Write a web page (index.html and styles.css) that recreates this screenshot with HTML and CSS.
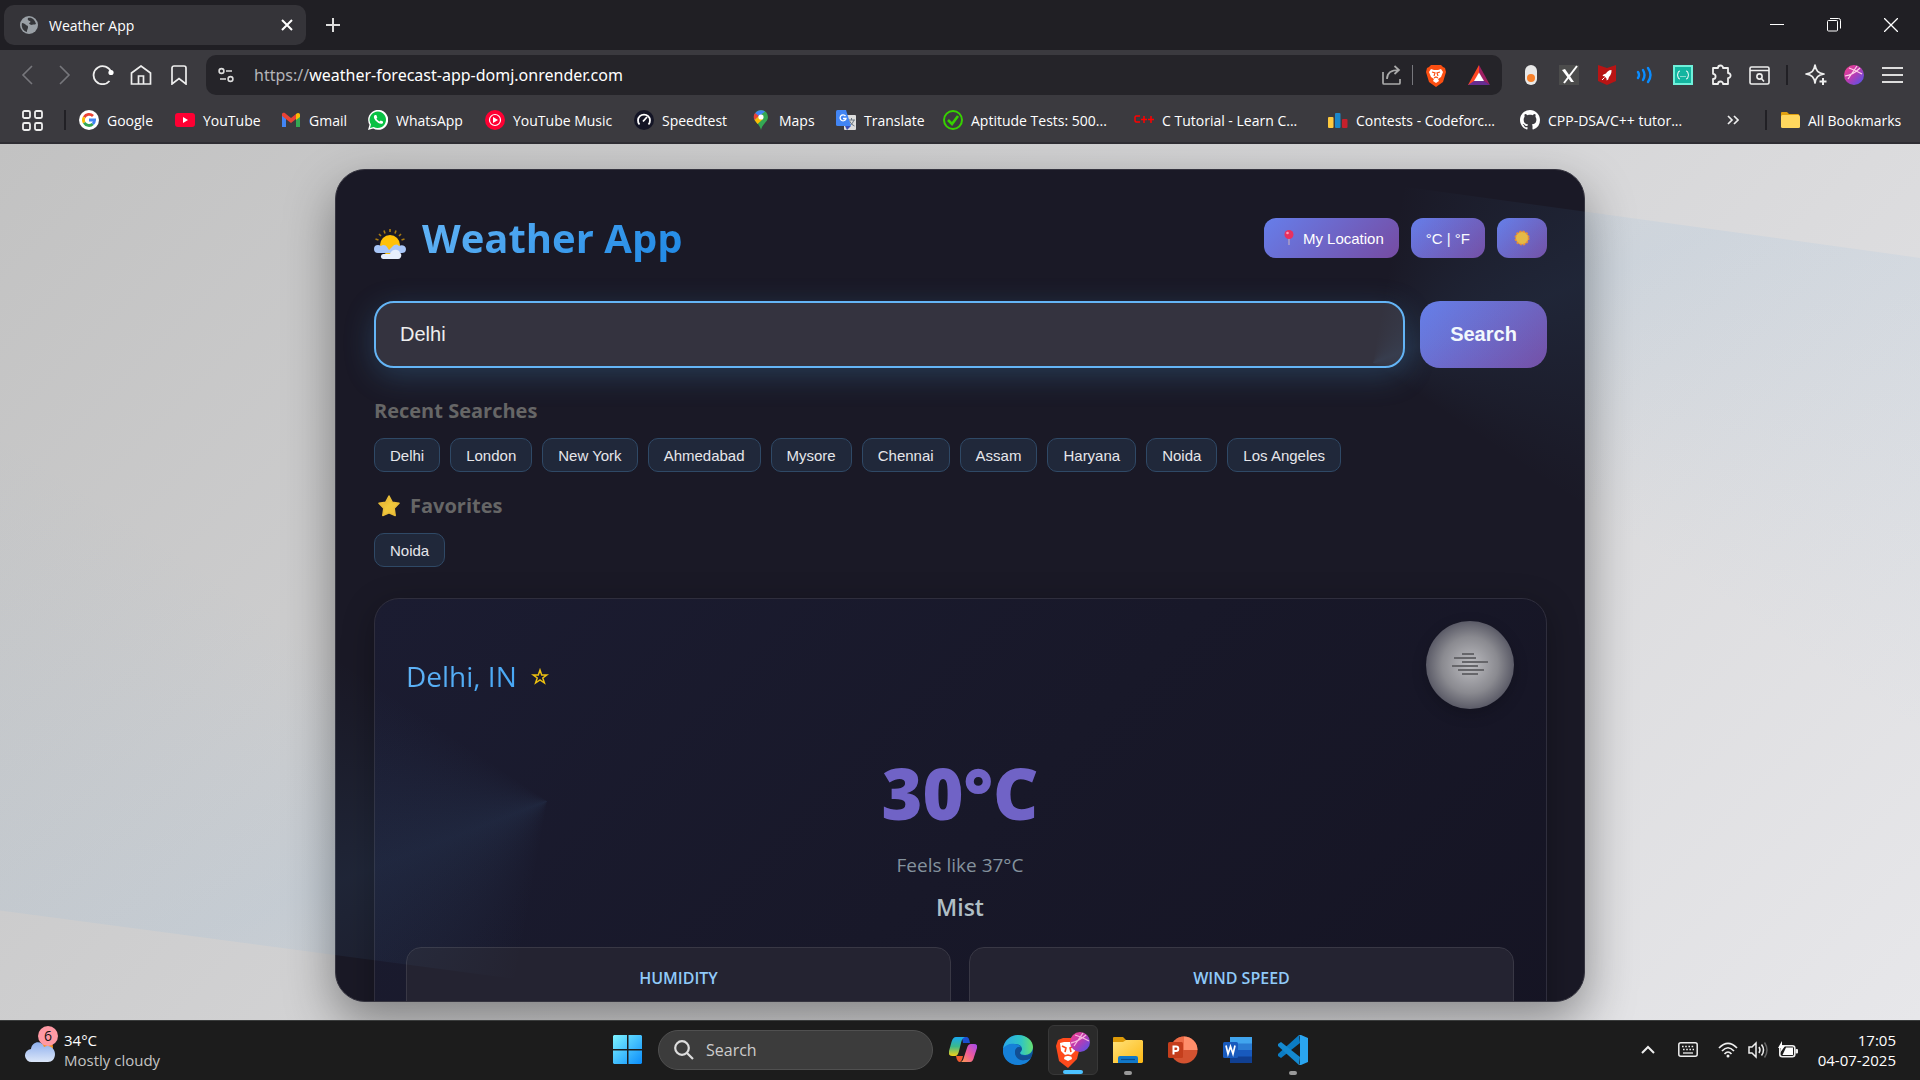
FILE: index.html
```html
<!DOCTYPE html>
<html lang="en">
<head>
<meta charset="utf-8">
<title>Weather App</title>
<link rel="stylesheet" href="styles.css">
</head>
<body>
<header class="browser">
  <div class="tabstrip">
    <div class="tab">
      <svg width="18" height="18" viewBox="0 0 18 18"><circle cx="9" cy="9" r="9" fill="#9aa0a6"/><path d="M2 7c2 0 3 1 4 2s2 0 2 2-1 2-1 5C3 15 1 11 2 7zM8 2c4-1 7 2 8 6-2 1-3 0-4 1-1 0-3-1-3-2 1 0 2-1 1-2-1 0-3-1-2-3z" fill="#35363a"/></svg>
      <span class="tab-title">Weather App</span>
      <button class="icon-btn tab-close" aria-label="Close tab"><svg width="12" height="12" viewBox="0 0 12 12" stroke="#fff" stroke-width="2"><path d="M1 1l10 10M11 1L1 11"/></svg></button>
    </div>
    <button class="icon-btn new-tab" aria-label="New tab"><svg width="14" height="14" viewBox="0 0 14 14" stroke="#ddd" stroke-width="2"><path d="M7 0v14M0 7h14"/></svg></button>
    <div class="window-controls">
      <button class="icon-btn" aria-label="Minimize"><svg width="14" height="14" viewBox="0 0 14 14" stroke="#fff"><path d="M0 6.500h14"/></svg></button>
      <button class="icon-btn" aria-label="Restore"><svg width="14" height="14" viewBox="0 0 14 14" stroke="#fff" fill="none"><rect x=".5" y="2.500" width="10" height="10.500" rx="1"/><path d="M3 .5h8.500a2 2 0 0 1 2 2v8"/></svg></button>
      <button class="icon-btn" aria-label="Close"><svg width="14" height="14" viewBox="0 0 14 14" stroke="#fff" stroke-width="1.300"><path d="M0 0l14 14M14 0L0 14"/></svg></button>
    </div>
  </div>

  <div class="toolbar">
    <button class="icon-btn" aria-label="Back"><svg width="12" height="20" viewBox="0 0 12 20" stroke="#77777c" stroke-width="1.600" fill="none"><path d="M11 1L2 10l9 9"/></svg></button>
    <button class="icon-btn" aria-label="Forward"><svg width="12" height="20" viewBox="0 0 12 20" stroke="#77777c" stroke-width="1.600" fill="none"><path d="M1 1l9 9-9 9"/></svg></button>
    <button class="icon-btn" aria-label="Reload"><svg width="22" height="20" viewBox="0 0 22 20" stroke="#eee" stroke-width="1.800" fill="none"><path d="M17.500 16A9 9 0 1 1 19 7"/><circle cx="19" cy="7.500" r="2.600" fill="#fff" stroke="none"/></svg></button>
    <button class="icon-btn" aria-label="Home"><svg width="22" height="20" viewBox="0 0 22 20" stroke="#eee" stroke-width="1.700" fill="none"><path d="M1.500 8L11 1l9.500 7v11h-19zM8.500 19v-8h5v8"/></svg></button>
    <button class="icon-btn" aria-label="Bookmark this page"><svg width="16" height="20" viewBox="0 0 16 20" stroke="#eee" stroke-width="1.700" fill="none"><path d="M1 3a2 2 0 0 1 2-2h10a2 2 0 0 1 2 2v16l-7-5.500L1 19z"/></svg></button>
    <div class="omnibox">
      <svg width="16" height="16" viewBox="0 0 16 16" stroke="#ddd" stroke-width="1.600" fill="none"><circle cx="3.500" cy="4" r="2.400"/><path d="M8 4h6M2 12h6"/><circle cx="12.500" cy="12" r="2.400"/></svg>
      <span class="url"><span class="scheme">https://</span>weather-forecast-app-domj.onrender.com</span>
      <svg width="19" height="20" viewBox="0 0 19 20" stroke="#aaa" stroke-width="1.700" fill="none"><path d="M1 7v11a1 1 0 0 0 1 1h15a1 1 0 0 0 1-1v-4M5 14c0-6 4-9 12-9M12.500 1L17 5l-4.500 4"/></svg>
      <i class="omni-divider"></i>
      <svg width="20" height="23" viewBox="0 0 20 23"><path d="M5 1h10l2 2 2 1 1 4-3 10-7 5-7-5L0 8l1-4 2-1z" fill="#fb4f12"/><path d="M5 5l3 1h4l3-1 2 3-2 5-3 2 1 2-3 2-3-2 1-2-3-2-2-5z" fill="#fff"/><path d="M6 8l3 1-1 3M14 8l-3 1 1 3M8 14l2-1 2 1" stroke="#fb4f12" stroke-width="1.200" fill="none"/></svg>
      <svg width="22" height="20" viewBox="0 0 22 20"><path d="M11 0L0 20h5l6-12z" fill="#ff4724"/><path d="M11 0l11 20-6-3.500L11 8z" fill="#9e1f63"/><path d="M0 20h22l-6-4H6z" fill="#662d91"/><path d="M11 7.500l5 8.500H6z" fill="#fff"/></svg>
    </div>
    <button class="icon-btn" aria-label="Toggle extension"><svg width="14" height="20" viewBox="0 0 14 20"><rect x="1" width="12" height="20" rx="6" fill="#e8e8e8"/><circle cx="7" cy="13" r="4" fill="#f7812b"/></svg></button>
    <button class="icon-btn" aria-label="X extension"><svg width="20" height="20" viewBox="0 0 20 20"><rect width="20" height="20" fill="#4c4c4c"/><path d="M3 5l3-1 9 13h-3z" fill="#fff"/><path d="M18 1L5 18" stroke="#fff" stroke-width="2"/></svg></button>
    <button class="icon-btn" aria-label="Security"><svg width="18" height="20" viewBox="0 0 18 20"><path d="M0 0l9 3 9-3v16l-9 4-9-4z" fill="#b81414"/><path d="M13.500 5c-3 0-4.500 2-5.500 3.500L5.500 9.500 4.500 11l2 .2L8.500 13.500l.2 2 1.500-1 .8-2.500c1.500-1.500 2.800-4 2.500-7z" fill="#fff"/><path d="M6.500 12.500L4 15" stroke="#fff"/></svg></button>
    <button class="icon-btn" aria-label="Volume extension"><svg width="18" height="18" viewBox="0 0 18 18" stroke="#0a8cff" stroke-width="2.400" stroke-linecap="round" fill="none"><path d="M2 6q2 3 0 6M7 4q3 5 0 10M12 2q5 7 0 14"/></svg></button>
    <button class="icon-btn" aria-label="JSON viewer"><svg width="20" height="20" viewBox="0 0 20 20"><rect x="1" y="1" width="18" height="18" fill="#13b5a0" stroke="#6ff0da" stroke-width="2"/><path d="M7 6q-2 0-2 2t-1 2q1 0 1 2t2 2M13 6q2 0 2 2t1 2q-1 0-1 2t-2 2" stroke="#fff" fill="none"/><path d="M7.500 11.500h5" stroke="#fff" stroke-dasharray="1 1"/></svg></button>
    <button class="icon-btn" aria-label="Extensions"><svg width="22" height="22" viewBox="0 0 22 22" stroke="#eee" stroke-width="1.800" fill="none" stroke-linejoin="round"><path d="M3 4h5a2.500 2.500 0 1 1 5 0h5v5a2.600 2.600 0 1 1 0 5.200V20h-5a2.500 2.500 0 0 0-5 0H3v-5a2.600 2.600 0 1 0 0-5.200z"/></svg></button>
    <button class="icon-btn" aria-label="Search page"><svg width="21" height="19" viewBox="0 0 21 19" stroke="#eee" stroke-width="1.600" fill="none"><rect x="1" y="1" width="19" height="17" rx="1.500"/><path d="M1 4.500h19M12.500 12.500l2.500 3"/><circle cx="10.500" cy="10.500" r="2.600"/></svg></button>
    <i class="bar-divider"></i>
    <button class="icon-btn" aria-label="Assistant"><svg width="22" height="22" viewBox="0 0 22 22" stroke="#eee" stroke-width="1.700" fill="none" stroke-linejoin="round"><path d="M10 1c1 6 3 8 9 9-6 1-8 3-9 9-1-6-3-8-9-9 6-1 8-3 9-9z"/><path d="M18 14v7M14.500 17.500h7" stroke-width="2"/></svg></button>
    <button class="icon-btn" aria-label="Profile"><svg width="20" height="20" viewBox="0 0 20 20"><defs><linearGradient id="av" x1="0" y1="0" x2="1" y2="1"><stop offset="0" stop-color="#fb3f8a"/><stop offset=".5" stop-color="#b63cb4"/><stop offset="1" stop-color="#4556f2"/></linearGradient></defs><circle cx="10" cy="10" r="10" fill="url(#av)"/><path d="M1 11Q9 10 16 3M5 3q6 2 13 6M4 14L13 1" stroke="#ffd0e8" stroke-width="1.200" fill="none"/></svg></button>
    <button class="icon-btn" aria-label="Menu"><svg width="21" height="18" viewBox="0 0 21 18" stroke="#ddd" stroke-width="2"><path d="M0 2h21M0 9h21M0 16h21"/></svg></button>
  </div>

  <nav class="bookmarks" aria-label="Bookmarks">
    <button class="icon-btn" aria-label="Apps"><svg width="21" height="21" viewBox="0 0 21 21" stroke="#eee" stroke-width="1.800" fill="none"><rect x="1" y="1" width="7" height="7" rx="1.500"/><rect x="13" y="1" width="7" height="7" rx="1.500"/><rect x="1" y="13" width="7" height="7" rx="1.500"/><rect x="13" y="13" width="7" height="7" rx="1.500"/></svg></button>
    <i class="bar-divider"></i>
    <a href="#"><svg width="20" height="20" viewBox="0 0 20 20"><circle cx="10" cy="10" r="10" fill="#fff"/><g fill="none" stroke-width="2.800"><path d="M14 6A5.600 5.600 0 0 0 5.200 7.200" stroke="#ea4335"/><path d="M5.200 7.200a5.600 5.600 0 0 0 0 5.600" stroke="#fbbc05"/><path d="M5.200 12.800A5.600 5.600 0 0 0 13.800 14" stroke="#34a853"/><path d="M13.800 14a5.600 5.600 0 0 0 1.800-4H10" stroke="#4285f4"/></g></svg>Google</a>
    <a href="#"><svg width="20" height="20" viewBox="0 0 20 20"><rect y="3" width="20" height="14" rx="3" fill="#ff0033"/><path d="M8 7l5 3-5 3z" fill="#fff"/></svg>YouTube</a>
    <a href="#"><svg width="20" height="20" viewBox="0 0 20 20"><path d="M1 5v12h4V8z" fill="#4285f4"/><path d="M19 5v12h-4V8z" fill="#34a853"/><path d="M1 4c1-2 3-1 4 0l5 4 5-4v5l-5 4-9-7z" fill="#ea4335"/><path d="M15 4c2-2 4-1 4 1v2l-4 3z" fill="#fbbc04"/></svg>Gmail</a>
    <a href="#"><svg width="20" height="20" viewBox="0 0 20 20"><path d="M0 20l1.500-5.200A10 10 0 1 1 5.200 18.500z" fill="#fff"/><path d="M2 18l1-3.600a8.200 8.200 0 1 1 2.700 2.500z" fill="#0ac144"/><path d="M7 5c-2 1-1 4 1 6s5 4 7 2l0-1.500-2.300-1-1 1c-1.500-.5-2.700-1.700-3.200-3l.8-1L8.300 5z" fill="#fff"/></svg>WhatsApp</a>
    <a href="#"><svg width="20" height="20" viewBox="0 0 20 20"><circle cx="10" cy="10" r="10" fill="#f03"/><circle cx="10" cy="10" r="5.500" fill="none" stroke="#fff" stroke-width="1.200"/><path d="M8 7l5 3-5 3z" fill="#fff"/></svg>YouTube Music</a>
    <a href="#"><svg width="20" height="20" viewBox="0 0 20 20"><circle cx="10" cy="10" r="10" fill="#141526"/><path d="M5.500 14.500a6 6 0 1 1 9 0M9 11.500L13 7" stroke="#fff" stroke-width="1.800" fill="none"/></svg>Speedtest</a>
    <a href="#"><svg width="20" height="20" viewBox="0 0 20 20"><path d="M10 20c-1-6-7-8-7-13a7 7 0 0 1 14 0c0 5-6 7-7 13z" fill="#34a853"/><path d="M3.500 10L14 1.500A7 7 0 0 0 3 7z" fill="#4285f4"/><path d="M4 3l4 3-4.500 4A7 7 0 0 1 4 3z" fill="#ea4335"/><path d="M3.500 10L9 5l3 4-5.500 5z" fill="#fbbc04"/><circle cx="10" cy="7" r="2.600" fill="#fff"/></svg>Maps</a>
    <a href="#"><svg width="20" height="20" viewBox="0 0 20 20"><rect x="8" y="5" width="12" height="15" rx="1" fill="#ddd"/><path d="M12 10h7M15.500 8v2M18 10q-1 4-5 6M13.500 11q2 4 5 5" stroke="#6b7680" fill="none"/><path d="M0 1.500Q0 0 1.500 0H10l5 16H1.500Q0 16 0 14.500z" fill="#4285f4"/><path d="M9 16h6l-4 4z" fill="#3a50b8"/><path d="M9.500 6A3 3 0 1 0 10 8.500H7" stroke="#fff" stroke-width="1.300" fill="none"/></svg>Translate</a>
    <a href="#"><svg width="20" height="20" viewBox="0 0 20 20" fill="none" stroke="#37d100"><circle cx="10" cy="10" r="9" stroke-width="2"/><path d="M5 10l4 4 6-8" stroke-width="2.600"/></svg>Aptitude Tests: 500...</a>
    <a href="#"><svg width="20" height="20" viewBox="0 0 20 20" fill="none" stroke="#f00" stroke-width="1.500"><path d="M6 6H2L1 7v4l1 1h4M7 9.500h6M10 6v7M14 9.500h6M17 6v7"/></svg>C Tutorial - Learn C...</a>
    <a href="#"><svg width="20" height="20" viewBox="0 0 20 20"><rect y="7" width="5.500" height="11" rx="1" fill="#fdc93f"/><rect x="7" y="3" width="5.500" height="15" rx="1" fill="#1b87cb"/><rect x="14" y="9" width="5.500" height="9" rx="1" fill="#c5202c"/></svg>Contests - Codeforc...</a>
    <a href="#"><svg width="20" height="20" viewBox="0 0 16 16"><path fill="#fff" d="M8 0C3.580 0 0 3.580 0 8c0 3.540 2.290 6.530 5.470 7.590.4.070.55-.17.55-.38 0-.19-.01-.82-.01-1.490-2.010.37-2.530-.49-2.690-.94-.09-.23-.48-.94-.82-1.130-.28-.15-.68-.52-.01-.53.63-.01 1.080.58 1.230.82.72 1.210 1.870.87 2.330.66.070-.52.28-.87.51-1.070-1.780-.2-3.640-.89-3.640-3.950 0-.87.31-1.590.82-2.150-.08-.2-.36-1.020.08-2.120 0 0 .67-.21 2.200.82.64-.18 1.320-.27 2-.27s1.360.09 2 .27c1.530-1.040 2.200-.82 2.200-.82.44 1.100.16 1.920.08 2.120.51.56.82 1.270.82 2.150 0 3.070-1.870 3.750-3.650 3.950.29.25.54.73.54 1.480 0 1.070-.01 1.930-.01 2.200 0 .21.15.46.55.38A8.010 8.010 0 0 0 16 8c0-4.420-3.580-8-8-8z"/></svg>CPP-DSA/C++ tutor...</a>
    <button class="icon-btn" aria-label="More bookmarks"><svg width="12" height="10" viewBox="0 0 12 10" stroke="#eee" stroke-width="1.700" fill="none"><path d="M1 1l4 4-4 4M7 1l4 4-4 4"/></svg></button>
    <i class="bar-divider"></i>
    <a href="#"><svg width="20" height="20" viewBox="0 0 20 20"><path d="M1 3q0-1 1-1h5l2 2h9q1 0 1 1v3H1z" fill="#e0a010"/><rect x="1" y="5" width="19" height="13" rx="1.500" fill="#ffd75e"/></svg>All Bookmarks</a>
  </nav>
</header>

<main class="page">
  <section class="app">
    <div class="app-header">
      <h1>
        <svg width="32" height="32" viewBox="0 0 32 32"><g stroke="#a87a12" stroke-width="1.600"><path d="M16 1v3M10 2.500l1 3M22 2.500l-1 3M5 6l2 2M27 6l-2 2M1.500 11l3 1M30.500 11l-3 1"/></g><circle cx="16" cy="17" r="10" fill="#ffc107"/><path d="M4 25a4 4 0 0 1 0-8c1 0 2 .4 3 1 2-2 5-1 6 1l2 3 3-3c3-3 5-3 7-1 3-2 7 0 7 3s-2 4-4 4z" fill="#a9c6f7"/><path d="M9 31a2 2 0 0 1 1-5l6 0c1-5 9-6 10-1 2 0 2 6-2 6z" fill="#e6eefc"/></svg>
        <span>Weather App</span>
      </h1>
      <div class="actions">
        <button class="pill"><svg width="12" height="16" viewBox="0 0 12 16"><path d="M6 8v7" stroke="#b9a8c4" stroke-width="1.300"/><circle cx="6" cy="4.500" r="4.500" fill="#e8305f"/><circle cx="4.500" cy="3" r="1.300" fill="#ff9ab4"/></svg>My Location</button>
        <button class="pill">°C | °F</button>
        <button class="pill" aria-label="Toggle theme"><svg class="sun" width="16" height="16" viewBox="0 0 16 16"><circle cx="8" cy="8" r="6.500" fill="#f0b232" stroke="#ef8a2c" stroke-width="2" stroke-dasharray="2 1.400"/><circle cx="8" cy="8" r="5.800" fill="#edbb3c"/></svg></button>
      </div>
    </div>

    <form class="search">
      <input type="text" value="Delhi" aria-label="City">
      <button type="button">Search</button>
    </form>

    <section class="group">
      <h2>Recent Searches</h2>
      <div class="chips">
        <button>Delhi</button><button>London</button><button>New York</button><button>Ahmedabad</button><button>Mysore</button><button>Chennai</button><button>Assam</button><button>Haryana</button><button>Noida</button><button>Los Angeles</button>
      </div>
    </section>
    <section class="group">
      <h2><svg width="28" height="24" viewBox="0 0 28 24"><defs><linearGradient id="st" x1="0" y1="0" x2="1" y2="1"><stop offset="0" stop-color="#e0a52e"/><stop offset=".5" stop-color="#efc93c"/><stop offset="1" stop-color="#eebd3a"/></linearGradient></defs><path d="M15 2l3.200 6.200 6.800 1.100-4.800 5 1 7.200-6.200-2.600-6.200 2.600 1-7.200-4.800-5 6.800-1.100z" fill="url(#st)" stroke="#e9bd38" stroke-width="1.500" stroke-linejoin="round"/></svg>Favorites</h2>
      <div class="chips"><button>Noida</button></div>
    </section>

    <article class="weather">
      <div class="place">
        <h2><span>Delhi, IN</span><button class="fav" aria-label="Add to favorites"><svg width="18" height="17" viewBox="0 0 18 17"><path d="M9 2l1.700 4.900H16l-4.200 3.100 1.600 5L9 12l-4.400 3 1.600-5L2 6.900h5.300z" fill="none" stroke="#ecc010" stroke-width="1.500"/></svg></button></h2>
        <div class="condition">
          <svg width="36" height="26" viewBox="0 0 36 26" stroke="#66666a" stroke-width="2.200"><path d="M10 2h12M2 6h22M10 10h26M0 14h26M6 18h26M10 22h16"/></svg>
        </div>
      </div>
      <p class="temp">30°C</p>
      <p class="feels">Feels like 37°C</p>
      <p class="desc">Mist</p>
      <div class="stats">
        <div class="stat"><h3>HUMIDITY</h3></div>
        <div class="stat"><h3>WIND SPEED</h3></div>
      </div>
    </article>
  </section>
  <div class="glow"></div>
</main>

<footer class="taskbar">
  <div class="widget">
    <div class="widget-icon">
      <svg width="30" height="30" viewBox="0 0 30 30"><defs><linearGradient id="cl" x1="0" y1="0" x2="0" y2="1"><stop offset="0" stop-color="#8fb0ee"/><stop offset="1" stop-color="#dbe6f8"/></linearGradient></defs><circle cx="22" cy="12" r="6" fill="#f7901e"/><path d="M7 27a6.500 6.500 0 0 1-1-13C7 6 17 5 19 12c6-3 11 2 11 7s-3 8-7 8z" fill="url(#cl)"/></svg>
      <span class="badge">6</span>
    </div>
    <div><div class="bright">34°C</div><div>Mostly cloudy</div></div>
  </div>
  <div class="dock">
    <button class="icon-btn" aria-label="Start"><svg width="30" height="30" viewBox="0 0 30 30"><defs><linearGradient id="wi" x1="0" y1="0" x2="1" y2="1"><stop offset="0" stop-color="#7df3ff"/><stop offset="1" stop-color="#0b8dfb"/></linearGradient></defs><path d="M1 0h13v14H0V1zM15.500 0H28l1 1v13H15.500zM0 15.500h14V29H1l-1-1zM15.500 15.500H29V28l-1 1H15.500z" fill="url(#wi)"/></svg></button>
    <label class="task-search"><svg width="20" height="20" viewBox="0 0 20 20" stroke="#ddd" stroke-width="2.200" fill="none"><circle cx="8" cy="8" r="6.800"/><path d="M13 13l6 6"/></svg><input type="text" placeholder="Search" aria-label="Search"></label>
    <button class="icon-btn" aria-label="Copilot"><svg width="28" height="26" viewBox="0 0 28 26"><defs><linearGradient id="c1" x1="0" y1="0" x2="0" y2="1"><stop offset="0" stop-color="#18a8f0"/><stop offset=".5" stop-color="#3bb98a"/><stop offset="1" stop-color="#f5d016"/></linearGradient><linearGradient id="c2" x1="1" y1="0" x2="0" y2="1"><stop offset="0" stop-color="#a14af0"/><stop offset=".5" stop-color="#ee5a9a"/><stop offset="1" stop-color="#ff9f4a"/></linearGradient></defs><path d="M13 0h5q2 0 3 6h-7z" fill="#1b4fd0"/><path d="M7 0h9q-3 1-4 6l-2 8q-1 5-4 5H3q-4 0-3-5l2.500-9Q4 0 7 0z" fill="url(#c1)"/><path d="M21 25H11q3 0 4-5l3-9q1-4 4-4h3q4 0 3 4l-3 9q-1 5-4 5z" fill="url(#c2)"/><path d="M7 19h7q-1 5-3 6-3 0-4-6z" fill="#f05a30"/></svg></button>
    <button class="icon-btn" aria-label="Edge"><svg width="30" height="30" viewBox="0 0 30 30"><defs><linearGradient id="e1" x1="0" y1="0" x2="1" y2="0"><stop offset="0" stop-color="#2aa7e8"/><stop offset=".6" stop-color="#2fc5c5"/><stop offset="1" stop-color="#66e070"/></linearGradient></defs><circle cx="15" cy="15" r="15" fill="#0c59a4"/><path d="M0 14C1 5 8 0 15 0c9 0 15 6 15 12 0 5-4 8-8 8-3 0-5-1-5-2s2-2 2-4c0-3-3-5-7-5C7 9 2 12 0 14z" fill="url(#e1)"/><path d="M0 14c2-4 7-6 12-5 3 0 5 2 6 3-4-1-6 2-6 5 0 6 5 9 9 8 3 0 5-1 7-2-3 5-8 7-13 7C5 30-1 22 0 14z" fill="#1680d8"/><path d="M17 18c0 3 6 5 12 1l-1 4c-8 5-16 1-16-6 0-3 3-6 6-4 2 2-1 3-1 5z" fill="#124f94"/></svg></button>
    <button class="icon-btn active" aria-label="Brave"><svg width="34" height="36" viewBox="0 0 34 36"><path d="M7 6h12l4 4 1 5-3 12-9 9-9-7L0 14l2-6z" fill="#ff4a1c"/><path d="M4 11l4-1h8l4 1-1 8-4 4 1 4-4 2-4-2 1-4-4-4z" fill="#fff"/><path d="M6 14l4 2-1 4M18 14l-4 2 1 4M8 24l4-1 4 1" stroke="#ff4a1c" stroke-width="1.600" fill="none"/><circle cx="24" cy="10" r="10" fill="url(#av)"/><path d="M15 11q8-2 15-8M19 3q7 2 14 6M18 14L27 1" stroke="#f7b8e0" stroke-width="1.300" fill="none"/></svg></button>
    <button class="icon-btn open" aria-label="File Explorer"><svg width="30" height="28" viewBox="0 0 30 28"><defs><linearGradient id="fo" x1="0" y1="0" x2="1" y2="1"><stop offset="0" stop-color="#ffe27a"/><stop offset="1" stop-color="#fdb813"/></linearGradient></defs><path d="M0 2q0-1 1-1h9l3 3v5H0z" fill="#dd9a08"/><path d="M0 6h10l3-2h16l1 1v21l-1 1H0z" fill="url(#fo)"/><path d="M5 27v-5q0-2 2-2h16q2 0 2 2v5z" fill="#1178c9"/><path d="M8 23.500h14" stroke="#0a4c8c" stroke-width="1.200"/></svg></button>
    <button class="icon-btn" aria-label="PowerPoint"><svg width="30" height="28" viewBox="0 0 30 28"><circle cx="16" cy="14" r="13.500" fill="#d35230"/><path d="M16 .5V14H2.500A13.500 13.500 0 0 1 16 .5z" fill="#ed6c47"/><path d="M16 .5A13.500 13.500 0 0 1 29.500 14H16z" fill="#ff8f6b"/><rect y="6" width="15" height="16" rx="1.500" fill="#c43e1c"/><path d="M5.500 18.500v-8h2.500a2.300 2.300 0 0 1 0 4.600H6" stroke="#fff" stroke-width="2" fill="none"/></svg></button>
    <button class="icon-btn" aria-label="Word"><svg width="30" height="28" viewBox="0 0 30 28"><path d="M7 1h22v7H7z" fill="#41a5ee"/><path d="M7 7.500h22V14H7z" fill="#2b7cd3"/><path d="M7 14h22v7H7z" fill="#185abd"/><path d="M7 20.500h22V27H7z" fill="#103f91"/><rect y="6" width="15" height="16" rx="1.500" fill="#185abd"/><path d="M3 9.500l2 8.500 2.500-7.500L10 18l2-8.500" stroke="#fff" stroke-width="1.700" fill="none"/></svg></button>
    <button class="icon-btn open" aria-label="Visual Studio Code"><svg width="30" height="30" viewBox="0 0 30 30"><path d="M22 8L3 23l-3-2v-2L21 0z" fill="#0b7cc4"/><path d="M22 22L3 7 0 9v2l21 19z" fill="#1489d0"/><path d="M21 0l2 0 7 3v24l-7 3-2 0q1-1 1-3V3q0-2-1-3z" fill="#2aa5f0"/></svg></button>
  </div>
  <div class="tray">
    <svg width="14" height="9" viewBox="0 0 14 9" stroke="#eee" stroke-width="2" fill="none"><path d="M1 8l6-6 6 6"/></svg>
    <svg class="keyboard" width="20" height="15" viewBox="0 0 20 15" stroke="#eee" fill="none"><rect x=".8" y=".8" width="18.400" height="13.400" rx="2" stroke-width="1.500"/><path d="M4 4.500h12M5 7.500h11" stroke-width="1.600" stroke-dasharray="1.600 1.600"/><path d="M5 11h10" stroke-width="1.300"/></svg>
    <svg width="20" height="16" viewBox="0 0 20 16" stroke="#eee" stroke-width="1.700" fill="none"><path d="M1 6q9-9 18 0M4 9q6-6.500 12 0M6.500 12q3.500-4 7 0"/><circle cx="10" cy="14" r="1.500" fill="#eee" stroke="none"/></svg>
    <svg width="20" height="18" viewBox="0 0 20 18" stroke="#eee" stroke-width="1.500" fill="none"><path d="M1 6h3l4-4v14l-4-4H1zM11 6q2 3 0 6M13.500 3.500q4 5.500 0 11"/><path d="M16.500 1.500q5 7.500 0 15" stroke="#666"/></svg>
    <svg width="20" height="17" viewBox="0 0 20 17"><rect x="1.800" y="4.800" width="15" height="11" rx="2.500" fill="none" stroke="#eee" stroke-width="1.600"/><path d="M8 6.500h7v7.500H4.500z" fill="#fff"/><rect x="17.500" y="8" width="2.500" height="4.500" rx="1" fill="#eee"/><path d="M4 0L0 7h3l-1 5 5-7H4z" fill="#fff"/></svg>
    <div class="clock"><div>17:05</div><div>04-07-2025</div></div>
  </div>
</footer>
</body>
</html>
```
FILE: styles.css
```css
* { box-sizing: border-box; }
body {
  margin: 0;
  height: 100vh;
  display: flex;
  flex-direction: column;
  overflow: hidden;
  font-family: "Open Sans", "Noto Sans", sans-serif;
  font-size: 14px;
  color: #fff;
}
h1, h2, h3, p { margin: 0; }
svg { display: block; flex: none; }
button, input { font: inherit; color: inherit; border: 0; margin: 0; }
.icon-btn {
  background: none;
  padding: 0;
  width: 38px;
  height: 40px;
  flex: none;
  display: flex;
  align-items: center;
  justify-content: center;
}

/* Browser frame */
.browser { flex: none; background: #3b3a3f; border-bottom: 2px solid #2e2d33; }
.tabstrip { height: 50px; background: #201f24; display: flex; align-items: center; padding-left: 4px; }
.tab {
  width: 302px;
  height: 40px;
  border-radius: 10px;
  background: #353439;
  display: flex;
  align-items: center;
  gap: 11px;
  padding-left: 16px;
}
.tab-title { flex: 1; }
.new-tab { margin-left: 8px; }
.window-controls { margin-left: auto; display: flex; padding-right: 1px; }
.window-controls .icon-btn { width: 57px; }
.toolbar { height: 50px; display: flex; align-items: center; padding: 0 9px 0 8px; }
.omnibox {
  flex: 1;
  height: 40px;
  margin: 0 10px 0 8px;
  padding: 0 12px;
  border-radius: 10px;
  background: #252429;
  display: flex;
  align-items: center;
  font-family: "Noto Sans", "Open Sans", sans-serif;
  font-size: 16px;
}
.url { flex: 1; margin-left: 20px; }
.scheme { color: #b4b4b8; }
.omni-divider { width: 1px; height: 20px; margin: 0 13px 0 11px; background: #77777c; }
.omnibox svg:last-child { margin-left: 22px; }
.bar-divider { width: 2px; height: 20px; background: #212025; margin: 0 auto; }
.toolbar .bar-divider { margin: 0 9px 0 8px; }
.bookmarks {
  height: 42px;
  padding: 0 8px 6px 13px;
  display: grid;
  grid-template-columns: 38px 28px 96px 106px 87px 117px 149px 117px 85px 107px 191px 194px 192px 194px 38px 28px 1fr;
  align-items: center;
}
.bookmarks a { display: flex; align-items: center; gap: 8px; color: #fff; text-decoration: none; white-space: nowrap; }

/* Page */
.page {
  flex: 1;
  min-height: 0;
  display: flex;
  justify-content: center;
  padding: 25px 20px 18px;
  background: linear-gradient(135deg, #c2c2c2, #e7e7ea);
  position: relative;
  overflow: hidden;
}
.glow {
  position: absolute;
  inset: 0;
  pointer-events: none;
  clip-path: polygon(0 0, 57% 0, 100% 13%, 100% 100%, 43% 100%, 0 87.5%);
  background:
    conic-gradient(at 28.5% 75%, transparent 189deg, rgba(90, 165, 230, .09) 249deg, transparent 305deg),
    conic-gradient(at 71.5% 25%, transparent 9deg, rgba(90, 165, 230, .09) 69deg, transparent 125deg);
}
.app {
  width: 100%;
  max-width: 1250px;
  padding: 38px 37px 38px 38px;
  border: 1px solid #35343f;
  border-radius: 30px;
  background: #1a1926;
  box-shadow: 0 20px 50px rgba(0, 0, 0, .4);
  overflow: hidden;
}
.app-header { height: 60px; display: flex; align-items: center; justify-content: space-between; }
h1 { display: flex; align-items: center; gap: 16px; font-size: 40px; line-height: 60px; font-weight: 700; }
h1 svg { margin-top: 12px; }
h1 span { background: linear-gradient(135deg, #64b5f6, #1e88e5); background-clip: text; color: transparent; }
.actions { display: flex; gap: 12px; font-family: "Liberation Sans", Arial, sans-serif; font-size: 15px; }
.pill {
  height: 40px;
  padding: 0 15px;
  border-radius: 12px;
  background: linear-gradient(135deg, #667eea, #764ba2);
  display: flex;
  align-items: center;
  gap: 8px;
}
.pill svg { margin-left: 4px; }
.pill svg.sun { margin: 0 2px; }
.search { display: flex; gap: 15px; margin-top: 33px; font-family: "Liberation Sans", Arial, sans-serif; font-size: 20px; }
.search input {
  flex: 1;
  height: 67px;
  padding: 0 24px;
  border: 2px solid #64b5f6;
  border-radius: 20px;
  background: #34333f;
  color: #eee;
  outline: 0;
  box-shadow: 0 8px 30px rgba(66, 135, 190, .3);
}
.search button { width: 127px; border-radius: 20px; font-weight: 700; background: linear-gradient(135deg, #667eea, #764ba2); }
.group { margin-top: 19px; }
.search + .group { margin-top: 28px; }
.group h2 { display: flex; align-items: center; gap: 8px; font-size: 20px; line-height: 30px; font-weight: 700; color: #666; }
.chips { display: flex; flex-wrap: wrap; gap: 10px; margin-top: 12px; }
.chips button {
  height: 34px;
  padding: 0 15px;
  border: 1px solid #2f4966;
  border-radius: 10px;
  background: #20283a;
  color: #e6e6ea;
  font-family: "Liberation Sans", Arial, sans-serif;
  font-size: 15px;
}
.weather {
  margin-top: 31px;
  padding: 22px 32px 32px 31px;
  border: 1px solid #2f2e3d;
  border-radius: 25px;
  background: linear-gradient(135deg, #1b1c31, #181829 50%, #151423);
  box-shadow: 0 8px 32px rgba(0, 0, 0, .3);
  text-align: center;
}
.place { display: flex; justify-content: space-between; align-items: flex-end; }
.place h2 { display: flex; align-items: center; gap: 14px; font-size: 28px; line-height: 66px; font-weight: 500; }
.place h2 span { background: linear-gradient(135deg, #64b5f6, #42a5f5); background-clip: text; color: transparent; }
.fav { background: none; padding: 0; }
.condition {
  width: 88px;
  height: 88px;
  border-radius: 50%;
  background: radial-gradient(circle, #bdbdc1, #8a8a90 45%, #5c5c68 70%);
  box-shadow: 0 5px 15px rgba(0, 0, 0, .2);
  display: flex;
  align-items: center;
  justify-content: center;
}
.temp { margin-top: 36px; font-size: 70px; line-height: 96px; font-weight: 800; color: #7063c6; }
.feels { margin-top: 9px; font-size: 19px; line-height: 30px; color: #84929d; }
.desc { margin-top: 11px; font-size: 23px; line-height: 32px; font-weight: 600; color: #b0bec5; }
.stats { display: grid; grid-template-columns: 1fr 1fr; gap: 18px; margin-top: 24px; }
.stat { height: 120px; padding: 18px; border: 1px solid #393845; border-radius: 15px; background: #242331; }
.stat h3 { font-size: 16px; line-height: 24px; font-weight: 600; color: #90caf9; }

/* Taskbar */
.taskbar {
  flex: none;
  height: 60px;
  padding: 0 24px 2px 25px;
  background: #1c1c1c;
  border-top: 1px solid #3a3c3c;
  display: grid;
  grid-template-columns: 1fr auto 1fr;
  align-items: center;
}
.widget { display: flex; align-items: center; gap: 9px; font-size: 15px; line-height: 20px; color: #c4c4c4; }
.bright { color: #fff; }
.widget-icon { position: relative; }
.badge {
  position: absolute;
  right: -3px;
  top: -9px;
  width: 20px;
  height: 20px;
  border-radius: 50%;
  background: #ff99a4;
  color: #111;
  font-size: 14px;
  text-align: center;
}
.dock { display: flex; align-items: center; gap: 5px; }
.dock .icon-btn { width: 50px; height: 50px; border-radius: 6px; position: relative; }
.dock .active { background: #2a2a2a; border: 1px solid #383838; }
.dock .active::after, .dock .open::after {
  content: "";
  position: absolute;
  bottom: 0;
  width: 8px;
  height: 4px;
  border-radius: 2px;
  background: #999;
}
.dock .active::after { width: 20px; background: #4cc2ff; }
.task-search {
  width: 275px;
  height: 40px;
  padding: 0 15px;
  border: 1px solid #505050;
  border-radius: 20px;
  background: #3c3c3c;
  display: flex;
  align-items: center;
  gap: 12px;
  font-size: 16px;
}
.task-search input { background: none; padding: 0; width: 100%; outline: 0; }
.task-search input::placeholder { color: #ccc; opacity: 1; }
.tray { display: flex; align-items: center; justify-content: flex-end; gap: 10px; }
.tray .keyboard { margin: 0 10px 0 13px; }
.clock { margin-left: 10px; text-align: right; font-size: 15px; line-height: 20px; }
```
